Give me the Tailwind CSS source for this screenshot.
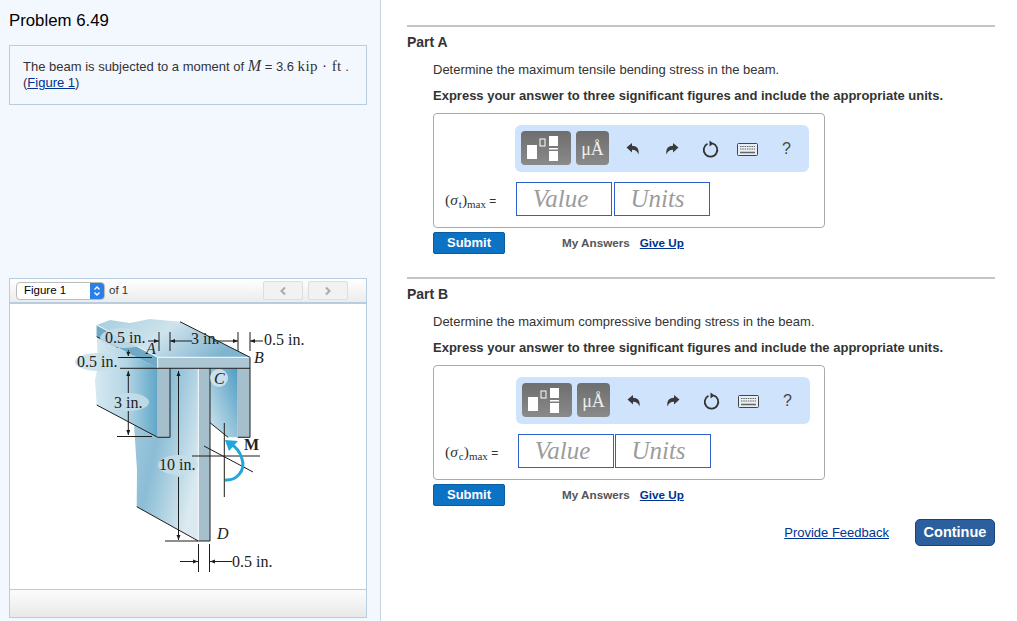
<!DOCTYPE html>
<html>
<head>
<meta charset="utf-8">
<script src="https://cdn.jsdelivr.net/npm/@tailwindcss/browser@4"></script>
</head>
<body class="bg-white">
<div class="flex w-[1017px] h-[621px] overflow-hidden font-['Liberation_Sans',Arial,sans-serif] text-[#333]">
  <aside class="w-[381px] h-full shrink-0 bg-[#f3f8ff] border-r border-[#c5d5e5] pl-[9px] pr-[13px] pt-[12px] flex flex-col">
    <h1 class="text-[16.8px] leading-[18px] text-black">Problem 6.49</h1>
    <div class="mt-[15px] h-[60px] border border-[#b9cde0] pl-[13px] pt-[12px] text-[13px] leading-[16px]">
      <div class="flex items-baseline">The beam is subjected to a moment of&nbsp;<span class="font-['Liberation_Serif',serif] italic text-[16px]">M</span>&nbsp;= 3.6&nbsp;<span class="font-['Liberation_Serif',serif] text-[15px] tracking-[0.4px]">kip · ft</span>&nbsp;.</div>
      <div>(<a class="text-[#00338f] underline">Figure 1</a>)</div>
    </div>
    <div class="mt-[173px] h-[340px] border border-[#b9cde0] bg-white flex flex-col">
      <div class="h-[25px] border-b-2 border-[#b9cde0] bg-gradient-to-b from-white to-[#ececec] flex items-center pl-[6px] pr-[18px] text-[11.5px] shrink-0">
        <div class="w-[89px] h-[18px] rounded-[4px] border border-[#bbb] bg-white flex items-center justify-between overflow-hidden text-black">
          <span class="pl-[7px]">Figure 1</span>
          <span class="w-[14px] h-full bg-[#2a7fe8] flex items-center justify-center">
            <svg width="8" height="12" viewBox="0 0 8 12" fill="none" stroke="#fff" stroke-width="1.4"><path d="M1.5 4.5 4 2l2.500 2.500M1.500 7.500 4 10l2.500-2.500"/></svg>
          </span>
        </div>
        <span class="ml-[4px]">of 1</span>
        <div class="ml-auto flex gap-[5px]">
          <div class="w-[40px] h-[19px] border border-[#ddd] rounded-[2px] bg-[#f2f2f2] flex items-center justify-center"><svg width="8" height="10" viewBox="0 0 8 10" fill="none" stroke="#aaa" stroke-width="2"><path d="M6 1.500 2.500 5 6 8.500"/></svg></div>
          <div class="w-[40px] h-[19px] border border-[#ddd] rounded-[2px] bg-[#f2f2f2] flex items-center justify-center"><svg width="8" height="10" viewBox="0 0 8 10" fill="none" stroke="#aaa" stroke-width="2"><path d="M2 1.500 5.500 5 2 8.500"/></svg></div>
        </div>
      </div>
      <div class="flex-1 relative">
        <svg class="absolute left-[50px] top-[6px]" width="260" height="270" viewBox="60 310 260 270" font-family="Liberation Serif, serif" font-size="16" fill="#222">
          <defs>
            <linearGradient id="g1" x1="0" y1="0" x2="1" y2="0"><stop offset="0" stop-color="#d6e9f1"/><stop offset="0.5" stop-color="#b5d6e4"/><stop offset="1" stop-color="#5fa6c8"/></linearGradient>
            <linearGradient id="g2" x1="0" y1="0" x2="1" y2="0.6"><stop offset="0" stop-color="#a9cee0"/><stop offset="0.45" stop-color="#8bbdd6"/><stop offset="1" stop-color="#dbeaf1"/></linearGradient>
            <linearGradient id="g3" x1="1" y1="0" x2="0" y2="1"><stop offset="0" stop-color="#4f9cc3"/><stop offset="1" stop-color="#d3e6ee"/></linearGradient>
            <linearGradient id="g4" x1="0" y1="0" x2="1" y2="0.3"><stop offset="0" stop-color="#a5cedf"/><stop offset="0.5" stop-color="#cfe3ec"/><stop offset="1" stop-color="#7fb4cf"/></linearGradient>
          </defs>
          <path d="M96.700 325 110 320 130 323 150 319 180 321.700 250 357.300 157.700 357.300 96.700 336.700Z" fill="url(#g4)"/>
          <path d="M96.700 325 157.700 357.300 157.700 368.300 96.700 336.700Z" fill="#6fa9c6"/>
          <path d="M96.700 336.700 157.700 368.300 157.700 437.300 96.700 405 95 380 98 365Z" fill="url(#g1)"/>
          <path d="M134 425 157.700 437.300 170 437.300 170 368.300 198.300 368.300 198.300 541 136.700 506.700 137 470Z" fill="url(#g2)"/>
          <path d="M210 368.300 237.700 368.300 237.700 437.300 228 437.300 210 422.700Z" fill="url(#g3)"/>
          <rect x="157.700" y="357.300" width="92.300" height="11" fill="#adc6d3"/>
          <rect x="157.700" y="368.300" width="12.300" height="69" fill="#a6bfcd"/>
          <rect x="237.700" y="368.300" width="12.300" height="69" fill="#a6bfcd"/>
          <rect x="198.300" y="368.300" width="11.700" height="172.700" fill="#a6bfcd"/>
          <path d="M96.700 325 157.700 357.300H250M157.700 357.300V368.300M198.300 368.300V541" fill="none" stroke="#fff" stroke-width="1" opacity="0.9"/>
          <g fill="none" stroke="#1d1d1d" stroke-width="1">
            <path d="M96.700 336.700 118 347.700M96.700 405 157.700 437.300M136.700 506.700 198.300 541M180 321.700 250 357.300M210 422.700 228 437.300"/>
            <path d="M250 357.300V437.300H237.700M157.700 437.300H170V368.300M198.300 541H210V368.300"/>
            <path d="M118 357.500H152M120 368.300H250M117 436.500H152M165 541H198M178.500 371V455M178.500 477V540M128.300 371V393M128.300 411V435M128.300 350V356"/>
            <path d="M159 332V351M170 332V351M238 332V351M250 332V351M198.500 544V572M209.500 544V572"/>
            <path d="M148 341H159M170 341H192M213 341H238M250 341H263M180 561.500H198M210 561.500H232"/>
            <path d="M192 456H260M204 446 253 472M224.300 423V497"/>
          </g>
          <g fill="#1d1d1d">
            <path d="M170 341l5-2v4ZM238 341l-5-2v4ZM159 341l-5-2v4ZM250 341l5-2v4ZM198 561.500l-5-2v4ZM210 561.500l5-2v4ZM178.500 371l-2 5h4ZM178.500 540l-2-5h4ZM128.300 371l-2 5h4ZM128.300 435l-2-5h4ZM128.300 356l-2-4h4Z"/>
          </g>
          <path d="M225 480C236 481 246 471 242 459 240 451 235 446 229 443" fill="none" stroke="#21a6dc" stroke-width="3"/>
          <path d="M225 440 238 441 229 451Z" fill="#21a6dc"/>
          <g fill="#c6dfe9" opacity="0.85">
            <ellipse cx="124" cy="338" rx="24" ry="10"/>
            <ellipse cx="97" cy="362" rx="22" ry="9"/>
            <ellipse cx="129" cy="402" rx="20" ry="9"/>
            <ellipse cx="178" cy="465" rx="20" ry="10"/>
            <ellipse cx="219" cy="378" rx="9" ry="9" fill="#d6e7ee"/>
          </g>
          <text x="105" y="343">0.5 in.</text>
          <text x="77" y="367">0.5 in.</text>
          <text x="114" y="408">3 in.</text>
          <text x="159" y="470">10 in.</text>
          <text x="191" y="344">3 in.</text>
          <text x="264" y="345">0.5 in.</text>
          <text x="232" y="567">0.5 in.</text>
          <text x="146" y="354" font-style="italic">A</text>
          <text x="254" y="363" font-style="italic">B</text>
          <text x="214" y="384" font-style="italic">C</text>
          <text x="217" y="539" font-style="italic">D</text>
          <text x="244" y="450" font-weight="bold">M</text>
        </svg>
      </div>
      <div class="h-[28px] border-t border-[#b9cde0] bg-gradient-to-b from-[#fcfcfc] to-[#e9e9e9] shrink-0"></div>
    </div>
  </aside>

  <main class="flex-1 pl-[26px] pr-[22px] pt-[25px] flex flex-col">
    <section class="h-[252px] border-t-2 border-[#c4c4c4]">
      <h3 class="mt-[7px] text-[14px] leading-[16px] font-bold">Part A</h3>
      <div class="ml-[26px]">
        <p class="mt-[12px] text-[13px] leading-[16px]">Determine the maximum tensile bending stress in the beam.</p>
        <p class="mt-[10px] text-[13px] leading-[16px] font-bold">Express your answer to three significant figures and include the appropriate units.</p>
        <div class="mt-[9px] w-[392px] h-[115px] border border-[#aaa] rounded-[4px] pl-[11px] pt-[11px]">
          <div class="ml-[70px] w-[294px] h-[47px] rounded-[6px] bg-[#cfe4fc] flex items-center pl-[6px] pb-[1px]">
            <div class="w-[50px] h-[34px] rounded-[4px] bg-gradient-to-b from-[#6e6e6e] to-[#8a8a8a] flex items-center justify-center"><svg width="40" height="30" viewBox="0 0 40 30"><rect x="1" y="12" width="10" height="14" fill="#fff"/><rect x="14" y="6" width="5" height="7" fill="none" stroke="#fff"/><rect x="23" y="3" width="9" height="10" fill="#fff"/><rect x="23" y="15" width="9" height="1.500" fill="#fff"/><rect x="23" y="18" width="9" height="10" fill="#fff"/></svg></div>
            <div class="ml-[5px] w-[33px] h-[34px] rounded-[4px] bg-gradient-to-b from-[#6e6e6e] to-[#8a8a8a] flex items-center justify-center text-[#eee] font-['Liberation_Serif',serif] text-[18px] pt-[3px]">μÅ</div>
            <svg class="ml-[17px] mt-[2px]" width="14" height="14" viewBox="0 0 14 14" fill="#3a3a3a"><path d="M0.500 5.500 6 1V3.800C10.500 3.800 13.500 6.500 12.500 12.500 11.500 9.500 9.500 7.800 6 7.800V10.500Z"/></svg>
            <svg class="ml-[25px] mt-[2px]" width="14" height="14" viewBox="0 0 14 14" fill="#3a3a3a"><path d="M13.500 5.500 8 1V3.800C3.500 3.800 .5 6.500 1.500 12.500 2.500 9.500 4.500 7.800 8 7.800V10.500Z"/></svg>
            <svg class="ml-[23px] mt-[2px]" width="18" height="18" viewBox="0 0 18 18" fill="none" stroke="#333" stroke-width="1.800"><path d="M10.500 3.400A6.800 6.800 0 1 1 5.500 3.800"/><path d="M7.500 .5 11.500 3.400 7.500 6.500Z" fill="#333" stroke="none"/></svg>
            <svg class="ml-[17px] mt-[2px]" width="21" height="13" viewBox="0 0 21 13"><rect x=".5" y=".5" width="20" height="12" rx="1" fill="#e8eef5" stroke="#444"/><path d="M3 3.500H18M3 6H18" stroke="#666" stroke-width="1.200" stroke-dasharray="1.500 .8"/><path d="M3 9.500H18" stroke="#666" stroke-width="1.500"/></svg>
            <span class="ml-[24px] mt-[2px] text-[16px] leading-none text-[#444]">?</span>
          </div>
          <div class="mt-[10px] flex items-center">
            <div class="w-[71px] font-['Liberation_Serif',serif] text-[15.5px] whitespace-nowrap pt-[1px]">(<i>σ</i><sub class="text-[11px] ml-[1px]">t</sub>)<sub class="text-[11px]">max</sub><span class="font-['Liberation_Sans',sans-serif] text-[12px]"> =</span></div>
            <input placeholder="Value" class="w-[96px] h-[34px] border border-[#2d63c8] pr-[7px] text-center font-['Liberation_Serif',serif] italic text-[25px] placeholder:text-[#9c9c9c] outline-none">
            <input placeholder="Units" class="ml-[2px] w-[96px] h-[34px] border border-[#2d63c8] pr-[9px] text-center font-['Liberation_Serif',serif] italic text-[25px] placeholder:text-[#9c9c9c] outline-none">
          </div>
        </div>
        <div class="mt-[4px] flex items-center text-[11.7px] font-bold h-[22px]">
          <button class="w-[72px] h-[22px] rounded-[2px] bg-[#0b72c4] border border-[#0a5c9e] text-white text-[13px]">Submit</button>
          <span class="ml-[57px] text-[#555]">My Answers</span>
          <a class="ml-[10px] text-[#00338f] underline">Give Up</a>
        </div>
      </div>
    </section>
    <section class="h-[252px] border-t-2 border-[#c4c4c4]">
      <h3 class="mt-[7px] text-[14px] leading-[16px] font-bold">Part B</h3>
      <div class="ml-[26px]">
        <p class="mt-[12px] text-[13px] leading-[16px]">Determine the maximum compressive bending stress in the beam.</p>
        <p class="mt-[10px] text-[13px] leading-[16px] font-bold">Express your answer to three significant figures and include the appropriate units.</p>
        <div class="mt-[9px] w-[392px] h-[115px] border border-[#aaa] rounded-[4px] pl-[11px] pt-[11px]">
          <div class="ml-[71px] w-[294px] h-[47px] rounded-[6px] bg-[#cfe4fc] flex items-center pl-[6px] pb-[1px]">
            <div class="w-[50px] h-[34px] rounded-[4px] bg-gradient-to-b from-[#6e6e6e] to-[#8a8a8a] flex items-center justify-center"><svg width="40" height="30" viewBox="0 0 40 30"><rect x="1" y="12" width="10" height="14" fill="#fff"/><rect x="14" y="6" width="5" height="7" fill="none" stroke="#fff"/><rect x="23" y="3" width="9" height="10" fill="#fff"/><rect x="23" y="15" width="9" height="1.500" fill="#fff"/><rect x="23" y="18" width="9" height="10" fill="#fff"/></svg></div>
            <div class="ml-[5px] w-[33px] h-[34px] rounded-[4px] bg-gradient-to-b from-[#6e6e6e] to-[#8a8a8a] flex items-center justify-center text-[#eee] font-['Liberation_Serif',serif] text-[18px] pt-[3px]">μÅ</div>
            <svg class="ml-[17px] mt-[2px]" width="14" height="14" viewBox="0 0 14 14" fill="#3a3a3a"><path d="M0.500 5.500 6 1V3.800C10.500 3.800 13.500 6.500 12.500 12.500 11.500 9.500 9.500 7.800 6 7.800V10.500Z"/></svg>
            <svg class="ml-[25px] mt-[2px]" width="14" height="14" viewBox="0 0 14 14" fill="#3a3a3a"><path d="M13.500 5.500 8 1V3.800C3.500 3.800 .5 6.500 1.500 12.500 2.500 9.500 4.500 7.800 8 7.800V10.500Z"/></svg>
            <svg class="ml-[23px] mt-[2px]" width="18" height="18" viewBox="0 0 18 18" fill="none" stroke="#333" stroke-width="1.800"><path d="M10.500 3.400A6.800 6.800 0 1 1 5.500 3.800"/><path d="M7.500 .5 11.500 3.400 7.500 6.500Z" fill="#333" stroke="none"/></svg>
            <svg class="ml-[17px] mt-[2px]" width="21" height="13" viewBox="0 0 21 13"><rect x=".5" y=".5" width="20" height="12" rx="1" fill="#e8eef5" stroke="#444"/><path d="M3 3.500H18M3 6H18" stroke="#666" stroke-width="1.200" stroke-dasharray="1.500 .8"/><path d="M3 9.500H18" stroke="#666" stroke-width="1.500"/></svg>
            <span class="ml-[24px] mt-[2px] text-[16px] leading-none text-[#444]">?</span>
          </div>
          <div class="mt-[10px] flex items-center">
            <div class="w-[73px] font-['Liberation_Serif',serif] text-[15.5px] whitespace-nowrap pt-[1px]">(<i>σ</i><sub class="text-[11px] ml-[1px]">c</sub>)<sub class="text-[11px]">max</sub><span class="font-['Liberation_Sans',sans-serif] text-[12px]"> =</span></div>
            <input placeholder="Value" class="w-[96px] h-[34px] border border-[#2d63c8] pr-[7px] text-center font-['Liberation_Serif',serif] italic text-[25px] placeholder:text-[#9c9c9c] outline-none">
            <input placeholder="Units" class="ml-[1px] w-[96px] h-[34px] border border-[#2d63c8] pr-[9px] text-center font-['Liberation_Serif',serif] italic text-[25px] placeholder:text-[#9c9c9c] outline-none">
          </div>
        </div>
        <div class="mt-[4px] flex items-center text-[11.7px] font-bold h-[22px]">
          <button class="w-[72px] h-[22px] rounded-[2px] bg-[#0b72c4] border border-[#0a5c9e] text-white text-[13px]">Submit</button>
          <span class="ml-[57px] text-[#555]">My Answers</span>
          <a class="ml-[10px] text-[#00338f] underline">Give Up</a>
        </div>
      </div>
      <div class="mt-[13px] flex items-center justify-end">
        <a class="text-[#00338f] underline text-[13px]">Provide Feedback</a>
        <button class="ml-[26px] w-[80px] h-[27px] rounded-[5px] bg-[#2c5f9e] border border-[#16437c] text-white font-bold text-[14.5px]">Continue</button>
      </div>
    </section>
  </main>
</div>
</body>
</html>
